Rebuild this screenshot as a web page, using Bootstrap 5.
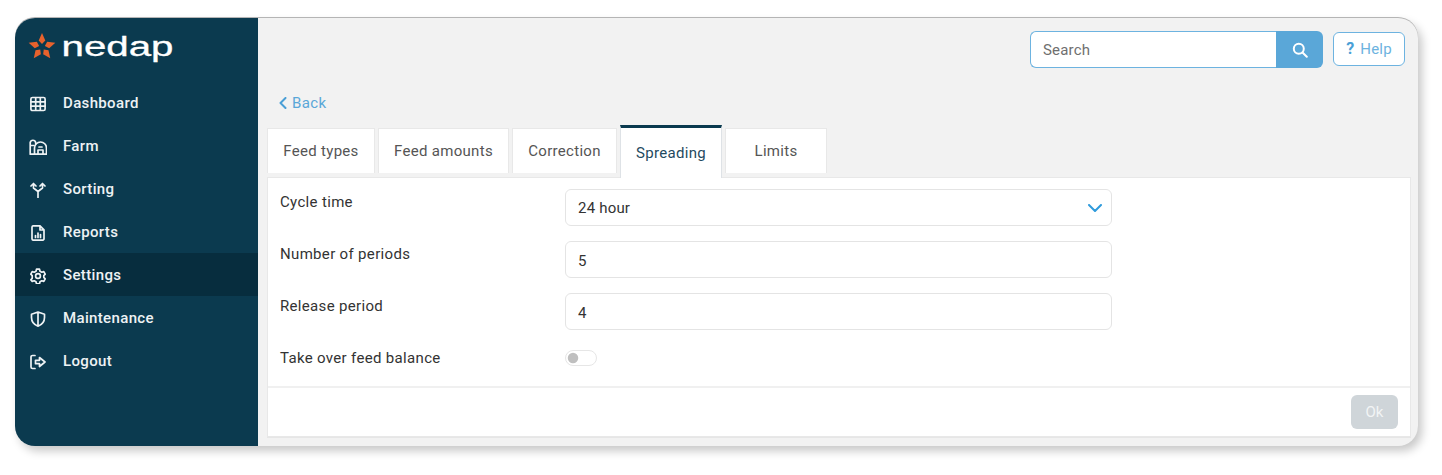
<!DOCTYPE html>
<html lang="en">

<head>
    <meta charset="UTF-8">
    <meta name="viewport" content="width=device-width, initial-scale=1.0">
    <title>Nedap - Spreading</title>
    <link href="https://cdn.jsdelivr.net/npm/bootstrap@5.3.2/dist/css/bootstrap.min.css" rel="stylesheet">
    <style>
        body {
            font-family: Roboto, "Liberation Sans", sans-serif;
            font-size: 15px;
            background: #fff;
            padding: 18px 24px 29px 15px;
            color: #333;
        }

        .app-window {
            height: 428px;
            border-radius: 20px;
            overflow: hidden;
            background: #f2f2f2;
            box-shadow: 0 -1px 0 #b5b5b5, 4px 5px 10px rgba(0, 0, 0, .22);
        }

        .side-bar {
            width: 243px;
            flex: none;
            background: #0b3a4f;
        }

        .brand-box {
            height: 64px;
            padding: 13px 0 0 13px;
            margin-bottom: -1px;
        }

        .side-link {
            height: 43px;
            padding: 2px 0 0 15px;
            gap: 17px;
            color: #eef2f4;
            font-weight: 500;
            letter-spacing: .35px;
        }

        .side-link:hover,
        .side-link:focus {
            color: #fff;
        }

        .side-link.is-current {
            background: #072d3e;
        }

        .side-link svg {
            width: 16px;
            height: 16px;
            flex: none;
            fill: none;
            stroke: currentColor;
            stroke-width: 1.7;
            stroke-linecap: round;
            stroke-linejoin: round;
        }

        .side-link svg.wide-icon {
            width: 18px;
            margin: 0 -1px;
        }

        .main-pane {
            padding: 13px 7px 9px 9px;
            min-width: 0;
        }

        .top-tools {
            padding-right: 6px;
            gap: 10px;
        }

        .search-box {
            width: 293px;
            height: 37px;
        }

        .search-box .form-control {
            border-color: #6db3e0;
            border-right: 0;
            border-radius: 6px 0 0 6px;
            font-size: 15px;
            padding: 7px 12px 5px;
            color: #333;
            letter-spacing: .2px;
        }

        .search-box .form-control::placeholder {
            color: #6f6f6f;
        }

        .search-btn {
            width: 47px;
            background: #5aa7d8;
            border: 0;
            border-radius: 0 6px 6px 0;
            padding: 0;
        }

        .help-btn {
            width: 72px;
            height: 34px;
            margin-top: 1px;
            padding: 0;
            gap: 6px;
            font-size: 15px;
            letter-spacing: .2px;
            color: #6db3e0;
            background: #fff;
            border: 1px solid #6db3e0;
            border-radius: 6px;
        }

        .help-btn b {
            color: #4a9fd6;
            font-size: 16px;
        }

        .back-link {
            margin: 23px 0 10px 12px;
            height: 24px;
            gap: 5px;
            color: #5aa7d8;
            text-decoration: none;
            letter-spacing: .4px;
        }

        .page-tabs {
            border: 0;
            gap: 3px;
            height: 52px;
            align-items: flex-start;
        }

        .page-tabs .nav-link {
            height: 45px;
            margin: 3px 0 0;
            padding: 1px 0 0;
            border: 1px solid #e8e8e8;
            border-bottom: 0;
            border-radius: 0;
            background: #fff;
            color: #555;
            display: flex;
            align-items: center;
            justify-content: center;
            letter-spacing: .3px;
        }

        .page-tabs .nav-link.active {
            height: 53px;
            margin: 0;
            padding: 0;
            border-top: 3px solid #0b3a4f;
            color: #1f4a60;
            position: relative;
            z-index: 2;
        }

        .form-card {
            height: 260px;
            border: 1px solid #e8e8e8;
            border-radius: 0;
            box-shadow: 0 1px 0 #e6e6e6;
        }

        .form-body {
            padding: 11px 12px 0;
        }

        .field-line {
            margin-bottom: 15px;
        }

        .field-label {
            width: 285px;
            flex: none;
            padding-top: 1.5px;
            letter-spacing: .33px;
        }

        .field-input {
            width: 547px;
            height: 37px;
            font-size: 15px;
            color: #333;
            border-color: #e4e4e4;
            border-radius: 6px;
            padding: 7px 12px 5px;
            letter-spacing: .2px;
        }

        .form-select.field-input {
            background-image: url("data:image/svg+xml,%3csvg xmlns='http://www.w3.org/2000/svg' viewBox='0 0 14 8'%3e%3cpath fill='none' stroke='%232f9bdc' stroke-width='2' stroke-linecap='round' stroke-linejoin='round' d='M1 1l6 6 6-6'/%3e%3c/svg%3e");
            background-size: 14px 8px;
            background-position: right 9px center;
        }

        .switch-wrap {
            min-height: 16px;
            margin: 0;
            padding: 0;
            font-size: 16px;
        }

        .switch-wrap .form-check-input {
            margin: 5px 0 0;
            border-color: #e6e6e6;
        }

        .form-foot {
            height: 50px;
            padding: 7px 12px;
            background: #fff;
            border-top: 2px solid #f0f0f0;
            border-radius: 0 !important;
            margin-top: auto;
        }

        .ok-btn {
            width: 47px;
            height: 34px;
            padding: 0;
            font-size: 15px;
            color: #f2f4f5;
            background: #cfd5d9;
            border: 0;
            border-radius: 6px;
        }

        .ok-btn:disabled {
            color: #f2f4f5;
            background: #cfd5d9;
            opacity: 1;
        }
    </style>
</head>

<body>
    <div class="app-window d-flex">
        <!-- Sidebar -->
        <aside class="side-bar d-flex flex-column">
            <div class="brand-box">
                <svg width="150" height="34" viewBox="0 0 150 34">
                    <g fill="#e8622d">
                        <polygon points="14,2 17.300,9.500 14,13 10.700,9.500" />
                        <polygon points="14,2 17.300,9.500 14,13 10.700,9.500" transform="rotate(72 14 16)" />
                        <polygon points="14,2 17.300,9.500 14,13 10.700,9.500" transform="rotate(144 14 16)" />
                        <polygon points="14,2 17.300,9.500 14,13 10.700,9.500" transform="rotate(216 14 16)" />
                        <polygon points="14,2 17.300,9.500 14,13 10.700,9.500" transform="rotate(288 14 16)" />
                    </g>
                    <text x="33.500" y="25" fill="#fff" stroke="#fff" stroke-width=".3" font-family="Liberation Sans" font-size="27" textLength="112" lengthAdjust="spacingAndGlyphs">nedap</text>
                </svg>
            </div>
            <nav class="nav flex-column">
                <a class="nav-link side-link d-flex align-items-center" href="#">
                    <svg viewBox="0 0 16 16"><rect x=".9" y="1.500" width="14.200" height="13" rx="1.500" /><path d="M1 5.800h14M1 10.200h14M5.700 2v12M10.300 2v12" /></svg>
                    Dashboard
                </a>
                <a class="nav-link side-link d-flex align-items-center" href="#">
                    <svg class="wide-icon" viewBox="0 0 18 16"><path d="M5 15.200H1.200V3.500a2.800 2.800 0 0 1 5.500 0V5M1.200 6.500H5" /><path d="M5.500 15.200V9a6 6 0 0 1 12 0v6.200zM9 15v-4h5v4M10 8h3" /></svg>
                    Farm
                </a>
                <a class="nav-link side-link d-flex align-items-center" href="#">
                    <svg viewBox="0 0 16 16"><path d="M8 15.500V9.500L3.500 6V1.500M8 9.500l4.500-3.500V1.500M1 4l2.500-2.500L6 4M10 4l2.500-2.500L15 4" /></svg>
                    Sorting
                </a>
                <a class="nav-link side-link d-flex align-items-center" href="#">
                    <svg viewBox="0 0 16 16"><path d="M3.500 15.200A1.500 1.500 0 0 1 2 13.700V2.300A1.500 1.500 0 0 1 3.500.8H10l4 4v8.900a1.500 1.500 0 0 1-1.500 1.500zM10 1v4h4M5.500 12.500v-2M8 12.500V8M10.500 12.500v-3" /></svg>
                    Reports
                </a>
                <a class="nav-link side-link d-flex align-items-center is-current" href="#">
                    <svg viewBox="0 0 16 16"><circle cx="8" cy="8" r="2.400" /><path d="M6.500 1.200h3l.5 2 1.800 1 2-.6 1.400 2.600-1.400 1.500v1.600l1.400 1.500-1.400 2.600-2-.6-1.800 1-.5 2h-3l-.5-2-1.800-1-2 .6L.8 11.800l1.400-1.500V7.700L.8 6.200l1.400-2.600 2 .6 1.800-1z" /></svg>
                    Settings
                </a>
                <a class="nav-link side-link d-flex align-items-center" href="#">
                    <svg viewBox="0 0 16 16"><path d="M8 15.200C4 13.700 1.500 10.500 1.500 6.500V3.200L8 1l6.500 2.200v3.300c0 4-2.500 7.200-6.500 8.700zM8 1v14" /></svg>
                    Maintenance
                </a>
                <a class="nav-link side-link d-flex align-items-center" href="#">
                    <svg viewBox="0 0 16 16"><path d="M5 1.500H2.500A1.500 1.500 0 0 0 1 3v10a1.500 1.500 0 0 0 1.500 1.500H5M5.500 6.300h4V3.500L15 8l-5.500 4.500V9.700h-4z" /></svg>
                    Logout
                </a>
            </nav>
        </aside>

        <!-- Main content -->
        <main class="main-pane flex-grow-1 d-flex flex-column">
            <div class="top-tools d-flex justify-content-end align-items-start">
                <div class="input-group search-box">
                    <input type="text" class="form-control" placeholder="Search">
                    <button class="btn search-btn d-flex align-items-center justify-content-center" type="button" aria-label="Search">
                        <svg width="16" height="16" viewBox="0 0 16 16" fill="none" stroke="#fff" stroke-width="2" stroke-linecap="round"><circle cx="6.800" cy="6.800" r="5" /><path d="M10.500 10.500L14.800 14.800" /></svg>
                    </button>
                </div>
                <button class="btn help-btn d-flex align-items-center justify-content-center" type="button"><b>?</b> Help</button>
            </div>

            <a class="back-link d-flex align-items-center" href="#">
                <svg width="8" height="12" viewBox="0 0 8 12" fill="none" stroke="#4a9fd6" stroke-width="2" stroke-linecap="round" stroke-linejoin="round"><path d="M6.500 1L1.500 6l5 5" /></svg>
                Back
            </a>

            <ul class="nav nav-tabs page-tabs">
                <li class="nav-item"><a class="nav-link" style="width: 108px" href="#">Feed types</a></li>
                <li class="nav-item"><a class="nav-link" style="width: 131px" href="#">Feed amounts</a></li>
                <li class="nav-item"><a class="nav-link" style="width: 105px" href="#">Correction</a></li>
                <li class="nav-item"><a class="nav-link active" style="width: 102px" href="#">Spreading</a></li>
                <li class="nav-item"><a class="nav-link" style="width: 102px" href="#">Limits</a></li>
            </ul>

            <div class="card form-card">
                <div class="form-body">
                    <div class="d-flex field-line">
                        <label class="field-label">Cycle time</label>
                        <select class="form-select field-input">
                            <option>24 hour</option>
                        </select>
                    </div>
                    <div class="d-flex field-line">
                        <label class="field-label">Number of periods</label>
                        <input type="text" class="form-control field-input" value="5">
                    </div>
                    <div class="d-flex field-line">
                        <label class="field-label">Release period</label>
                        <input type="text" class="form-control field-input" value="4">
                    </div>
                    <div class="d-flex">
                        <label class="field-label">Take over feed balance</label>
                        <div class="form-check form-switch switch-wrap">
                            <input class="form-check-input" type="checkbox" role="switch">
                        </div>
                    </div>
                </div>
                <div class="card-footer form-foot d-flex justify-content-end">
                    <button class="btn ok-btn" type="button" disabled>Ok</button>
                </div>
            </div>
        </main>
    </div>

    <script src="https://cdn.jsdelivr.net/npm/bootstrap@5.3.2/dist/js/bootstrap.bundle.min.js"></script>
</body>

</html>
